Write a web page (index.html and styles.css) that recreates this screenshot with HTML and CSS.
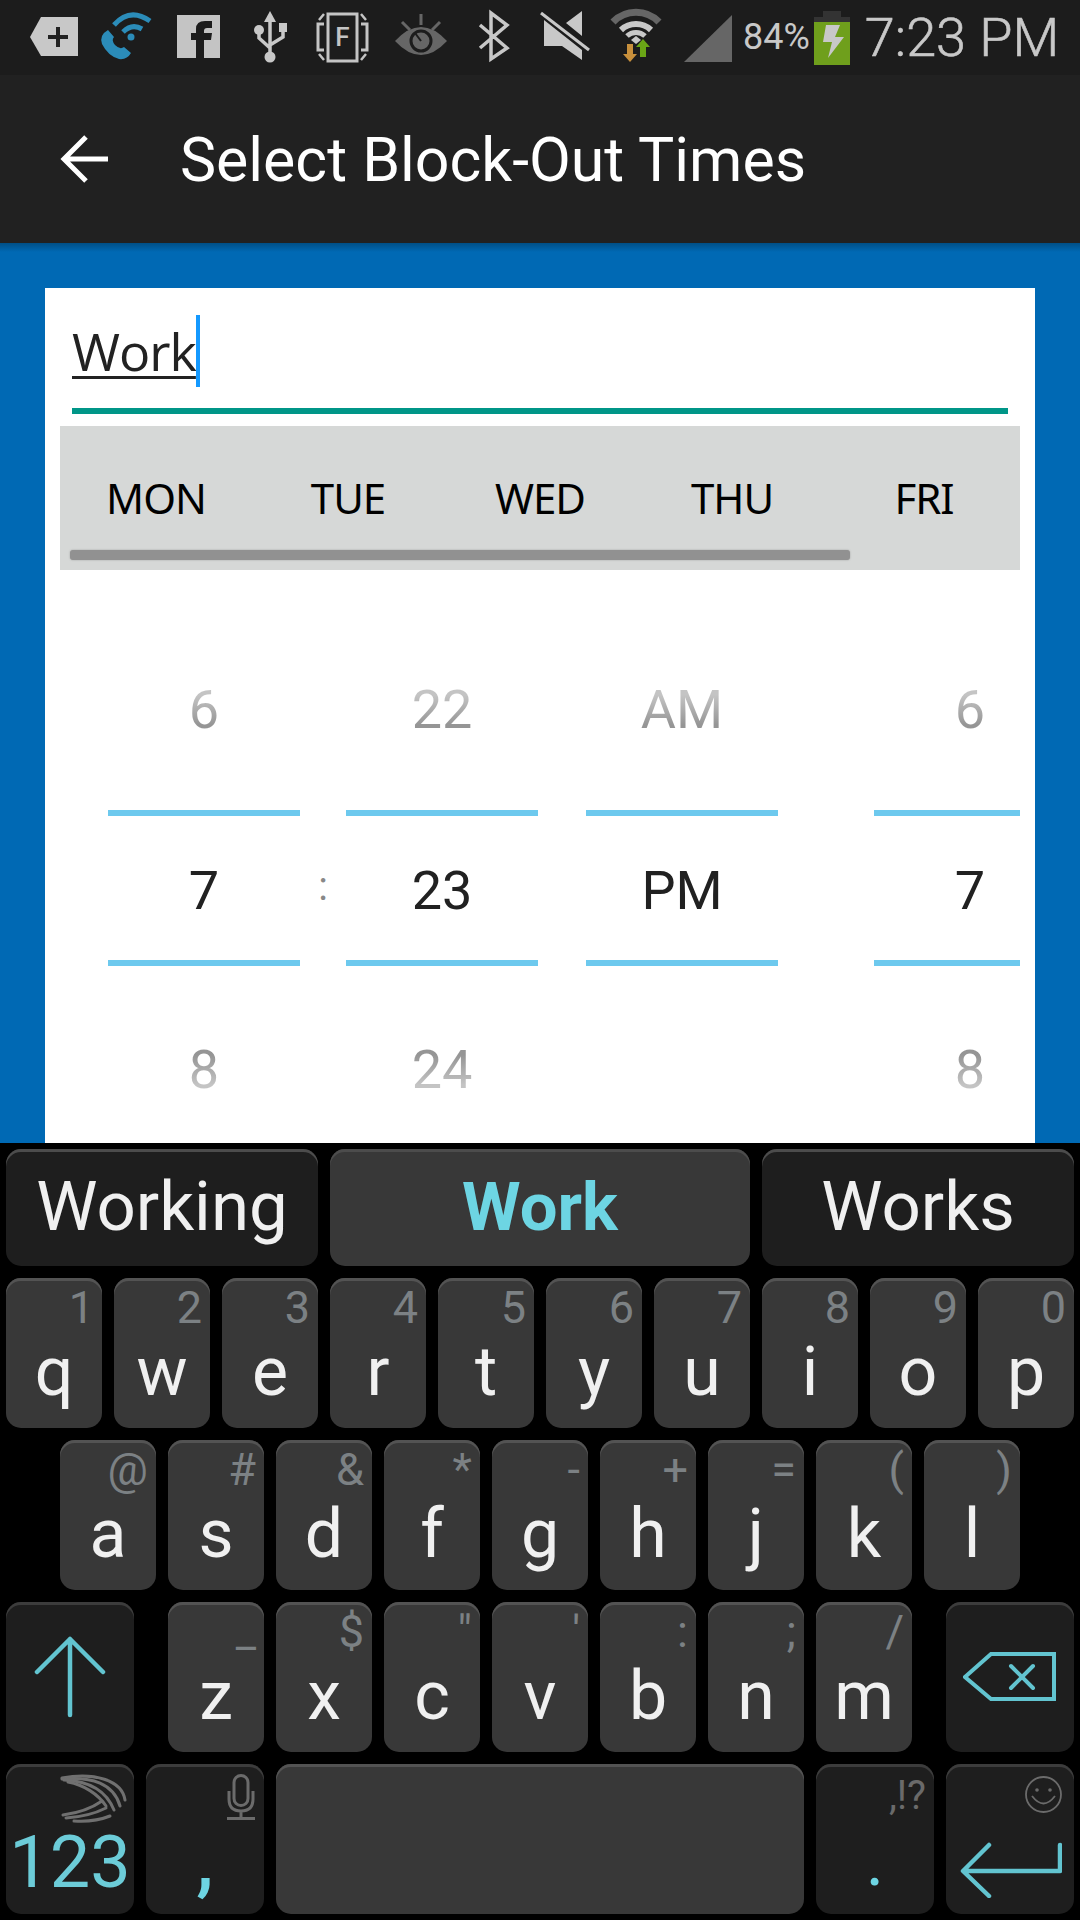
FILE: index.html
```html
<!DOCTYPE html>
<html lang="en">
<head>
  <meta charset="UTF-8">
  <meta name="viewport" content="width=device-width, initial-scale=1.0">
  <title>Select Block-Out Times</title>
  <link rel="stylesheet" href="styles.css">
</head>
<body>

  <!-- Status bar -->
  <div class="statusbar">
    <svg class="sicon" viewBox="0 0 72 75">
      <path d="M12 37 L23 17 H60 V56 H23 Z" fill="#c8c8c8"/>
      <path d="M38 27 h4 v8 h8 v4 h-8 v8 h-4 v-8 h-8 v-4 h8 Z" fill="#222"/>
    </svg>
    <svg class="sicon" viewBox="0 0 72 75">
      <path d="M18 30 L24 37 Q21 40 25 45 Q30 50 34 47 L41 53 Q37 60 29 59 Q18 56 12 44 Q9 35 18 30 Z" fill="#2b8cb9"/>
      <g fill="none" stroke="#2b8cb9" stroke-width="5">
        <path d="M24 25 Q40 7 60 21"/>
        <path d="M33 32 Q42 23 52 29"/>
      </g>
      <circle cx="41" cy="37" r="3.5" fill="#2b8cb9"/>
    </svg>
    <svg class="sicon" viewBox="0 0 72 75">
      <rect x="15" y="15" width="43" height="43" fill="#c4c4c4"/>
      <path d="M34 58 V40 H29 V33 H34 V29 Q34 21 43 21 H50 V28 H45 Q42 28 42 31 V33 H50 L49 40 H42 V58 Z" fill="#1c1c1c"/>
    </svg>
    <svg class="sicon" viewBox="0 0 72 75">
      <path d="M36 11 L42 22 H30 Z" fill="#c8c8c8"/>
      <circle cx="36" cy="57" r="5.5" fill="#c8c8c8"/>
      <circle cx="25" cy="30" r="5" fill="#c8c8c8"/>
      <rect x="45" y="23" width="8" height="9" fill="#c8c8c8"/>
      <path d="M36 20 V54 M25 32 V38 L36 48 M49 30 V37 L36 45" fill="none" stroke="#c8c8c8" stroke-width="3.5"/>
    </svg>
    <svg class="sicon" viewBox="0 0 72 75">
      <g fill="none" stroke="#c4c4c4" stroke-width="3">
        <rect x="22" y="14" width="29" height="47"/>
        <path d="M18 24 H12 V50 H18 M55 24 H61 V50 H55"/>
        <path d="M13 20 L18 14 M60 20 L55 14 M13 54 L18 60 M60 54 L55 60" stroke-width="2.5"/>
      </g>
      <text class="ftext" x="36.5" y="46">F</text>
    </svg>
    <svg class="sicon" viewBox="0 0 72 75">
      <path d="M17 41 Q43 13 69 41 Q43 69 17 41 Z" fill="#666"/>
      <circle cx="43" cy="41" r="10" fill="#666" stroke="#1c1c1c" stroke-width="3"/>
      <path d="M43 14 V25 M24 22 L32 30 M62 22 L54 30" stroke="#666" stroke-width="3" fill="none"/>
      <path d="M37 33 L43 41" stroke="#1c1c1c" stroke-width="2"/>
    </svg>
    <svg class="sicon" viewBox="0 0 72 75">
      <path d="M30 25 L57 48 L41 59 V13 L57 25 L30 48" fill="none" stroke="#c8c8c8" stroke-width="3.5"/>
    </svg>
    <svg class="sicon" viewBox="0 0 72 75">
      <path d="M44 23 L60 11 V36 Z M22 20 V46 H40 L60 60 V50 Z" fill="#c8c8c8"/>
      <path d="M19 13 L67 50" stroke="#c8c8c8" stroke-width="3"/>
    </svg>
    <svg class="sicon" viewBox="0 0 72 75">
      <g fill="none">
        <path d="M19 22 A32 32 0 0 1 65 22" stroke="#666" stroke-width="7"/>
        <path d="M27 30 A22 22 0 0 1 57 30" stroke="#c8c8c8" stroke-width="6"/>
        <path d="M33 36 A13 13 0 0 1 51 36" stroke="#c8c8c8" stroke-width="5"/>
      </g>
      <path d="M37 40 L42 36 L47 40 L42 44 Z" fill="#c8c8c8"/>
      <path d="M33 44 H39 V54 H43 L36 62 L29 54 H33 Z" fill="#c8903c"/>
      <path d="M49 39 L56 47 H52 V57 H46 V47 H42 Z" fill="#6aa516"/>
    </svg>
    <svg class="sicon" viewBox="0 0 72 75">
      <path d="M18 62 L66 15 V62 Z" fill="#666"/>
    </svg>
    <span class="battery-text">84%</span>
    <svg class="battery" viewBox="0 0 36 54">
      <rect x="9" y="0" width="18" height="6" fill="#333"/>
      <rect x="0" y="6" width="36" height="5" fill="#333"/>
      <rect x="0" y="11" width="36" height="43" fill="#6f9f1c"/>
      <path d="M12 14 H26 L21 26 H30 L14 47 L18 31 H9 Z" fill="#c8c8c8"/>
    </svg>
    <span class="clock">7:23 PM</span>
  </div>

  <!-- App bar -->
  <div class="appbar">
    <svg class="back" viewBox="0 0 48 48">
      <path d="M48 24 H4 M26 2 L4 24 L26 46" fill="none" stroke="#fff" stroke-width="5"/>
    </svg>
    <h1>Select Block-Out Times</h1>
  </div>

  <div class="content">
    <div class="card">
      <div class="field">
        <span class="field-text">Work</span><span class="cursor"></span>
      </div>

      <div class="days">
        <div class="day-row">
          <span>MON</span><span>TUE</span><span>WED</span><span>THU</span><span>FRI</span>
        </div>
        <div class="scrollbar"></div>
      </div>

      <div class="picker">
        <div class="wheel">
          <div class="prev">6</div>
          <div class="current">7</div>
          <div class="next">8</div>
        </div>
        <div class="colon">:</div>
        <div class="wheel">
          <div class="prev">22</div>
          <div class="current">23</div>
          <div class="next">24</div>
        </div>
        <div class="wheel wheel-ampm">
          <div class="prev">AM</div>
          <div class="current">PM</div>
          <div class="next"></div>
        </div>
        <div class="wheel wheel-end">
          <div class="prev">6</div>
          <div class="current">7</div>
          <div class="next">8</div>
        </div>
      </div>
    </div>
  </div>

  <!-- Keyboard -->
  <div class="keyboard">
    <div class="suggestions">
      <div class="suggestion">Working</div>
      <div class="suggestion active">Work</div>
      <div class="suggestion">Works</div>
    </div>

    <div class="row">
      <div class="key"><span class="hint">1</span><span class="label">q</span></div>
      <div class="key"><span class="hint">2</span><span class="label">w</span></div>
      <div class="key"><span class="hint">3</span><span class="label">e</span></div>
      <div class="key"><span class="hint">4</span><span class="label">r</span></div>
      <div class="key"><span class="hint">5</span><span class="label">t</span></div>
      <div class="key"><span class="hint">6</span><span class="label">y</span></div>
      <div class="key"><span class="hint">7</span><span class="label">u</span></div>
      <div class="key"><span class="hint">8</span><span class="label">i</span></div>
      <div class="key"><span class="hint">9</span><span class="label">o</span></div>
      <div class="key"><span class="hint">0</span><span class="label">p</span></div>
    </div>

    <div class="row row-home">
      <div class="key"><span class="hint">@</span><span class="label">a</span></div>
      <div class="key"><span class="hint">#</span><span class="label">s</span></div>
      <div class="key"><span class="hint">&amp;</span><span class="label">d</span></div>
      <div class="key"><span class="hint">*</span><span class="label">f</span></div>
      <div class="key"><span class="hint">-</span><span class="label">g</span></div>
      <div class="key"><span class="hint">+</span><span class="label">h</span></div>
      <div class="key"><span class="hint">=</span><span class="label">j</span></div>
      <div class="key"><span class="hint">(</span><span class="label">k</span></div>
      <div class="key"><span class="hint">)</span><span class="label">l</span></div>
    </div>

    <div class="row">
      <div class="key dark wide shift">
        <svg class="key-icon" width="72" height="84" viewBox="0 0 72 84">
          <path d="M36 80 V4 M3 37 L36 4 L69 37" fill="none" stroke="#62c4d0" stroke-width="4.5" stroke-linecap="round" stroke-linejoin="round"/>
        </svg>
      </div>
      <div class="key"><span class="hint">_</span><span class="label">z</span></div>
      <div class="key"><span class="hint">$</span><span class="label">x</span></div>
      <div class="key"><span class="hint">"</span><span class="label">c</span></div>
      <div class="key"><span class="hint">'</span><span class="label">v</span></div>
      <div class="key"><span class="hint">:</span><span class="label">b</span></div>
      <div class="key"><span class="hint">;</span><span class="label">n</span></div>
      <div class="key"><span class="hint">/</span><span class="label">m</span></div>
      <div class="key dark wide backspace">
        <svg class="key-icon" width="94" height="50" viewBox="0 0 94 50">
          <path d="M2 25 L28 2 H91 V47 H28 Z" fill="none" stroke="#62c4d0" stroke-width="4"/>
          <path d="M48 14 L70 36 M70 14 L48 36" fill="none" stroke="#62c4d0" stroke-width="4" stroke-linecap="round"/>
        </svg>
      </div>
    </div>

    <div class="row">
      <div class="key dark wide numbers">
        <svg class="swiftkey" width="128" height="60" viewBox="0 0 128 60">
          <g fill="none" stroke="#707070" stroke-width="3" stroke-linecap="round">
            <path d="M56 14 C88 8 116 16 119 36"/>
            <path d="M56 15 C86 12 108 20 114 42"/>
            <path d="M58 16 C82 17 100 26 108 46"/>
            <path d="M62 18 C78 21 92 30 100 42"/>
            <path d="M57 51 C72 49 86 44 96 37"/>
            <path d="M60 54 C76 53 90 49 100 44"/>
            <path d="M68 57 C82 58 94 56 104 52"/>
          </g>
        </svg>
        <span class="numbers-text">123</span>
      </div>
      <div class="key dark comma">
        <svg class="corner-icon mic" width="28" height="46" viewBox="0 0 28 46">
          <rect x="7" y="1.5" width="14" height="30" rx="7" fill="none" stroke="#6b6b6b" stroke-width="3"/>
          <path d="M2 17 V25 Q2 37 14 37 Q26 37 26 25 V17 M14 37 V44 M0 44.5 H28" fill="none" stroke="#6b6b6b" stroke-width="3"/>
        </svg>
        <span class="accent">,</span>
      </div>
      <div class="key space"></div>
      <div class="key dark period">
        <span class="hint hint-dim">,!?</span>
        <span class="accent">.</span>
      </div>
      <div class="key dark wide enter">
        <svg class="corner-icon smiley" width="37" height="37" viewBox="0 0 37 37">
          <circle cx="18.5" cy="18.5" r="17.5" fill="none" stroke="#6b6b6b" stroke-width="1.8"/>
          <circle cx="12" cy="14" r="1.8" fill="#6b6b6b"/>
          <circle cx="25" cy="14" r="1.8" fill="#6b6b6b"/>
          <path d="M7 20 Q18.5 35 30 20" fill="none" stroke="#6b6b6b" stroke-width="1.8"/>
        </svg>
        <svg class="return" width="102" height="56" viewBox="0 0 102 56">
          <path d="M100 3 V29 H4 M29 3 L3 29 L29 54" fill="none" stroke="#62c4d0" stroke-width="4.5" stroke-linejoin="round" stroke-linecap="round"/>
        </svg>
      </div>
    </div>
  </div>

</body>
</html>
```

FILE: styles.css
```css
* {
  box-sizing: border-box;
}
body {
  margin: 0;
  width: 1080px;
  height: 1920px;
  overflow: hidden;
  font-family: Roboto, sans-serif;
  background: #000;
  display: flex;
  flex-direction: column;
}

/* status bar */
.statusbar {
  height: 75px;
  background: #1c1c1c;
  padding-left: 18px;
  display: flex;
  align-items: center;
  color: #c8c8c8;
}
.sicon {
  width: 72px;
  height: 75px;
  flex: none;
}
.ftext {
  font-family: Roboto, sans-serif;
  font-size: 26px;
  font-weight: 500;
  fill: #c4c4c4;
  text-anchor: middle;
}
.battery-text {
  font-size: 36px;
  line-height: 75px;
  margin-left: 5px;
}
.battery {
  width: 36px;
  height: 54px;
  margin-left: 4px;
  flex: none;
}
.clock {
  font-size: 54px;
  font-weight: 300;
  line-height: 78px;
  margin-left: 15px;
  white-space: nowrap;
  -webkit-text-stroke: 0.6px #c8c8c8;
}

/* app bar */
.appbar {
  height: 168px;
  background: #212121;
  padding-left: 60px;
  display: flex;
  align-items: center;
}
.back {
  width: 48px;
  height: 48px;
  flex: none;
}
.appbar h1 {
  margin: 4px 0 0 72px;
  color: #fff;
  font-size: 60.8px;
  font-weight: 400;
  line-height: 1;
  white-space: nowrap;
}

/* form card */
.content {
  height: 900px;
  background: #0069b4;
  background-image: linear-gradient(#004f86, #0069b4 9px);
  padding: 45px 45px 0;
}
.card {
  height: 855px;
  background: #fff;
  padding: 27px 15px 0;
}
.field {
  margin: 0 12px 12px;
  height: 99px;
  border-bottom: 6px solid #009688;
  display: flex;
  align-items: flex-start;
}
.field-text {
  font-family: "Open Sans", sans-serif;
  font-size: 52px;
  letter-spacing: -1px;
  line-height: 72px;
  color: #222;
  text-decoration: underline;
  text-decoration-thickness: 3px;
  text-underline-offset: 5px;
}
.cursor {
  width: 4px;
  height: 72px;
  background: #1499ff;
  flex: none;
}
.days {
  height: 144px;
  background: #d6d8d7;
}
.day-row {
  display: flex;
  padding-top: 46px;
}
.day-row span {
  width: 192px;
  text-align: center;
  font-family: "Noto Sans", sans-serif;
  font-size: 42px;
  letter-spacing: -1px;
  line-height: 52px;
  color: #000;
}
.scrollbar {
  width: 780px;
  height: 10px;
  margin: 26px 0 0 10px;
  background: #919191;
  border-radius: 3px;
  box-shadow: 0 0 2px #a0a0a0;
}
.picker {
  height: 573px;
  overflow: hidden;
  display: flex;
  padding-left: 48px;
}
.wheel {
  width: 192px;
  flex: none;
  text-align: center;
  font-size: 54px;
}
.wheel-ampm {
  margin-left: 48px;
}
.wheel-end {
  margin-left: 96px;
}
.prev, .next {
  height: 100px;
  line-height: 100px;
  color: transparent;
  -webkit-background-clip: text;
  background-clip: text;
}
.prev {
  margin: 90px 0 50px;
  background-image: linear-gradient(#c4c4c4 35%, #959595 65%);
}
.next {
  margin-top: 54px;
  background-image: linear-gradient(#959595 35%, #c4c4c4 65%);
}
.current {
  height: 156px;
  padding-top: 3px;
  line-height: 144px;
  color: #212121;
  border-top: 6px solid #6dc9ee;
  border-bottom: 6px solid #6dc9ee;
}
.colon {
  width: 46px;
  flex: none;
  margin-top: 237px;
  text-align: center;
  font-size: 40px;
  line-height: 160px;
  color: #888;
}

/* keyboard */
.keyboard {
  flex: 1;
  background: #000;
  padding: 6px 6px 0;
  display: flex;
  flex-direction: column;
  gap: 12px;
}
.suggestions, .row {
  display: flex;
  gap: 12px;
}
.suggestion {
  width: 312px;
  height: 117px;
  border-radius: 15px;
  background: #1e1e1e;
  box-shadow: inset 0 3px 0 #4c4c4c;
  text-align: center;
  font-size: 69px;
  line-height: 116px;
  color: #f0f0f0;
}
.suggestion.active {
  width: 420px;
  background: #383838;
  color: #6dd5e3;
  font-size: 67px;
  font-weight: 700;
}
.row-home {
  padding-left: 54px;
}
.key {
  position: relative;
  width: 96px;
  height: 150px;
  border-radius: 15px;
  background: #383838;
  box-shadow: inset 0 3px 0 #535353;
  display: flex;
  flex-direction: column;
  align-items: center;
  flex: none;
}
.key.dark {
  background: #1e1e1e;
  box-shadow: inset 0 3px 0 #3c3c3c;
}
.key.wide {
  width: 128px;
}
.hint {
  align-self: flex-end;
  padding-right: 8px;
  font-size: 45px;
  line-height: 59px;
  height: 59px;
  color: #7c8184;
}
.hint-dim {
  font-size: 40px;
  padding-top: 2px;
  color: #6a6a6a;
}
.label {
  font-size: 68px;
  line-height: 70px;
  color: #f0f0f0;
}
.shift {
  margin-right: 22px;
}
.backspace {
  margin-left: 22px;
}
.shift, .backspace {
  justify-content: center;
}
.key-icon {
  display: block;
}
.swiftkey {
  position: absolute;
  top: 0;
  left: 0;
}
.numbers-text {
  margin-top: 61px;
  font-size: 72px;
  line-height: 76px;
  color: #6cccd8;
}
.comma {
  width: 118px;
}
.space {
  width: 528px;
}
.period {
  width: 118px;
}
.accent {
  margin-top: 59px;
  font-size: 78px;
  font-weight: 500;
  line-height: 76px;
  color: #6dd5e3;
}
.period .accent {
  margin-top: 0;
  font-size: 70px;
  font-weight: 400;
}
.corner-icon {
  position: absolute;
  top: 10px;
  right: 9px;
}
.smiley {
  top: 12px;
  right: 12px;
}
.return {
  position: absolute;
  left: 14px;
  top: 78px;
}
```
